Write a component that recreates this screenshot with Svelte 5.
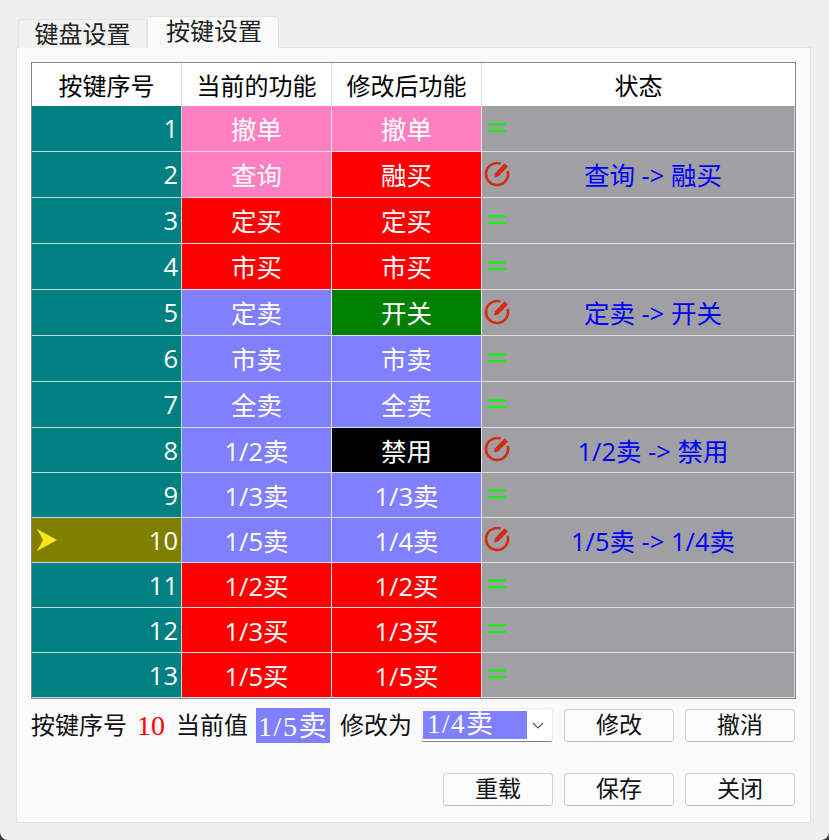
<script lang="ts">
	const PINK = '#ff80c0';
	const RED = '#ff0000';
	const BLUE = '#8080ff';
	const GREEN = '#008000';
	const BLACK = '#000000';

	const rows = [
		{ cur: '撤单', curBg: PINK, next: '撤单', nextBg: PINK },
		{ cur: '查询', curBg: PINK, next: '融买', nextBg: RED },
		{ cur: '定买', curBg: RED, next: '定买', nextBg: RED },
		{ cur: '市买', curBg: RED, next: '市买', nextBg: RED },
		{ cur: '定卖', curBg: BLUE, next: '开关', nextBg: GREEN },
		{ cur: '市卖', curBg: BLUE, next: '市卖', nextBg: BLUE },
		{ cur: '全卖', curBg: BLUE, next: '全卖', nextBg: BLUE },
		{ cur: '1/2卖', curBg: BLUE, next: '禁用', nextBg: BLACK },
		{ cur: '1/3卖', curBg: BLUE, next: '1/3卖', nextBg: BLUE },
		{ cur: '1/5卖', curBg: BLUE, next: '1/4卖', nextBg: BLUE },
		{ cur: '1/2买', curBg: RED, next: '1/2买', nextBg: RED },
		{ cur: '1/3买', curBg: RED, next: '1/3买', nextBg: RED },
		{ cur: '1/5买', curBg: RED, next: '1/5买', nextBg: RED }
	];
	const selected = 10;
</script>

<div class="window">
	<div class="tabs">
		<div class="tab">键盘设置</div>
		<div class="tab active">按键设置</div>
	</div>
	<div class="panel">
		<div class="table">
			<div class="head">按键序号</div>
			<div class="head">当前的功能</div>
			<div class="head">修改后功能</div>
			<div class="head last">状态</div>
			{#each rows as row, i}
				<div class="cell num" class:short={i >= 7} class:current={i + 1 === selected}>
					{#if i + 1 === selected}
						<svg class="arrow" width="20" height="22" viewBox="0 0 20 22">
							<path d="M0 0 L20 11 L0 22 L6 11 Z" fill="#f5e61e" />
						</svg>
					{/if}
					{i + 1}
				</div>
				<div class="cell func" style="background: {row.curBg}">{row.cur}</div>
				<div class="cell func" style="background: {row.nextBg}">{row.next}</div>
				<div class="cell status">
					<span class="mark">
						{#if row.cur === row.next}
							<svg width="18" height="10" viewBox="0 0 18 10">
								<path d="M0 1.5H18M0 8H18" stroke="#22e81e" stroke-width="2.4" />
							</svg>
						{:else}
							<svg width="26" height="26" viewBox="0 0 26 26">
								<path d="M16.5 2.6A11 11 0 1 0 23.6 10" fill="none" stroke="#d42c14" stroke-width="2.6" />
								<path d="M10 16.5 L11 12.2 L20.6 2.2 L24 5.4 L14.2 15.4 Z" fill="#d42c14" />
							</svg>
						{/if}
					</span>
					{#if row.cur !== row.next}
						<span class="change">{row.cur} -&gt; {row.next}</span>
					{/if}
				</div>
			{/each}
		</div>

		<div class="edit">
			<span class="label">按键序号</span>
			<span class="index">10</span>
			<span class="label">当前值</span>
			<span class="value">1/5卖</span>
			<span class="label">修改为</span>
			<div class="combo">
				<span class="combo-text">1/4卖</span>
				<svg width="12" height="7" viewBox="0 0 12 7">
					<path d="M1 1 L6 6 L11 1" fill="none" stroke="#555" stroke-width="1.1" />
				</svg>
			</div>
			<button>修改</button>
			<button>撤消</button>
		</div>

		<div class="actions">
			<button>重载</button>
			<button>保存</button>
			<button>关闭</button>
		</div>
	</div>
</div>

<style>
	:global(body) {
		background: #3a3a3a;
	}

	.window {
		box-sizing: border-box;
		width: 829px;
		height: 840px;
		padding: 16px 18px 17px 16px;
		background: #efefef;
		border-radius: 0 0 8px 8px;
		display: flex;
		flex-direction: column;
		font-family: 'Liberation Serif', 'Noto Sans CJK SC', serif;
		font-size: 24px;
		color: #111;
	}

	.tabs {
		display: flex;
		align-items: flex-end;
		padding-left: 2px;
		height: 31px;
		position: relative;
		z-index: 1;
	}

	.tab {
		box-sizing: border-box;
		width: 129px;
		height: 29px;
		margin-bottom: -1px;
		border: 1px solid #e3e3e3;
		border-bottom: none;
		border-radius: 3px 3px 0 0;
		background: #f1f1f1;
		text-align: center;
		font-size: 24px;
		line-height: 30px;
		color: #222;
	}

	.tab.active {
		width: 132px;
		height: 32px;
		padding-left: 2px;
		background: #f9f9f9;
	}

	.panel {
		flex: 1;
		box-sizing: border-box;
		border: 1px solid #e3e3e3;
		background: #fafafa;
		padding: 14px 14px 0 14px;
	}

	.table {
		display: grid;
		grid-template-columns: 150px 150px 150px 313px;
		grid-template-rows: 43px repeat(7, 46px) repeat(6, 45px);
		border: 1px solid #85878c;
		font-family: 'Open Sans', 'Noto Sans CJK SC', sans-serif;
		font-size: 25.5px;
	}

	.head {
		display: flex;
		align-items: center;
		justify-content: center;
		padding-bottom: 1px;
		background: #fff;
		color: #000;
		font-family: 'Noto Sans CJK SC', sans-serif;
		font-size: 24px;
		border-right: 1px solid #e0e0e0;
	}

	.head.last {
		border-right: none;
	}

	.cell {
		box-sizing: border-box;
		display: flex;
		align-items: center;
		padding-bottom: 2px;
		color: #fff;
		border-right: 1px solid #e4e4e4;
		border-bottom: 1px solid #e0e0e0;
		min-width: 0;
	}

	.num {
		justify-content: flex-end;
		padding-right: 3px;
		background: #008080;
		position: relative;
		border-right-color: #b9dcdc;
		border-bottom-color: #b9dcdc;
	}

	.num.short {
		padding-bottom: 0;
	}

	.num.current {
		background: #808000;
	}

	.arrow {
		position: absolute;
		left: 5px;
		top: 11px;
	}

	.func {
		justify-content: center;
	}

	.status {
		background: #a0a0a4;
		border-right-color: #d4d4d4;
	}

	.mark {
		flex: none;
		width: 30px;
		display: flex;
		justify-content: center;
	}

	.change {
		flex: 1;
		text-align: center;
		color: #0000ff;
	}

	.edit {
		display: flex;
		align-items: center;
		height: 35px;
		margin-top: 9px;
		white-space: nowrap;
	}

	.label {
		line-height: 33px;
		margin-top: 2px;
	}

	.index {
		color: #f00;
		font-size: 28px;
		margin: 0 11px 0 10px;
	}

	.value {
		box-sizing: border-box;
		height: 35px;
		width: 74px;
		margin: 0 10px 0 8px;
		padding-top: 3px;
		background: #8080ff;
		color: #fff;
		font-size: 28px;
		letter-spacing: 1.5px;
		line-height: 32px;
		text-align: center;
	}

	.combo {
		box-sizing: border-box;
		width: 132px;
		height: 34px;
		margin-left: 9px;
		padding: 2px 8px 2px 1px;
		display: flex;
		align-self: flex-start;
		align-items: center;
		justify-content: space-between;
		background: #fff;
		border: 1px solid #ececec;
		border-bottom: 1px solid #808080;
		border-radius: 3px;
	}

	.combo-text {
		width: 104px;
		height: 28px;
		line-height: 26px;
		padding: 0 0 0 4px;
		box-sizing: border-box;
		background: #8080ff;
		color: #fff;
		font-size: 27px;
		letter-spacing: 1.5px;
	}

	button {
		box-sizing: border-box;
		width: 110px;
		height: 33px;
		margin-left: 11px;
		padding: 0;
		background: #fdfdfd;
		border: 1px solid #d0d0d0;
		border-bottom-color: #bcbcbc;
		border-radius: 4px;
		font: inherit;
		font-size: 23px;
		line-height: 32px;
		color: #111;
	}

	.actions {
		display: flex;
		justify-content: flex-end;
		margin-top: 30px;
		padding-right: 1px;
	}
</style>
